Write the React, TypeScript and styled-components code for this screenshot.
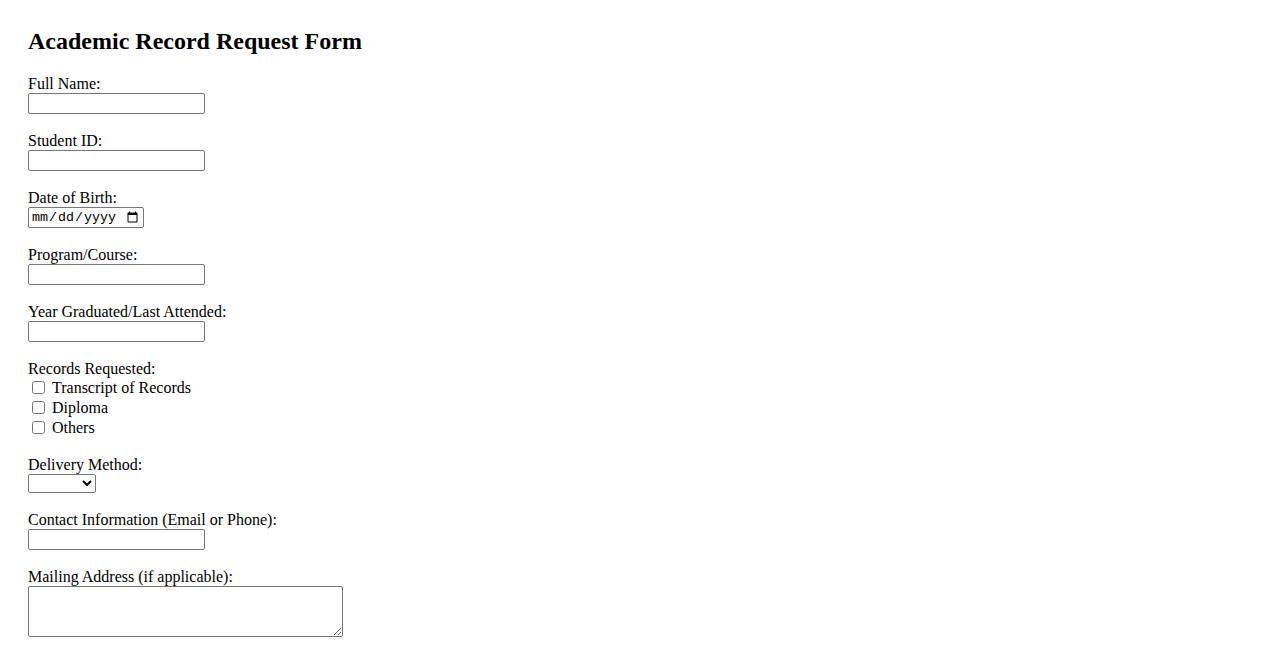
import styled, { createGlobalStyle } from "styled-components";

const GlobalStyle = createGlobalStyle`
	html, body {
		margin: 0;
		padding: 0;
		background: #fff;
	}
	body {
		font-family: "Liberation Serif", "Times New Roman", serif;
		font-size: 16px;
		color: #000;
	}
`;

const Page = styled.div`
	padding: 28px;
`;

const Title = styled.h2`
	margin: 0 0 20px;
	font-size: 24px;
	line-height: 27px;
	font-weight: bold;
`;

const Form = styled.form`
	display: flex;
	flex-direction: column;
	gap: 18px;
`;

const Field = styled.div`
	display: flex;
	flex-direction: column;
	align-items: flex-start;
`;

const Label = styled.label`
	display: block;
	line-height: 18px;
	height: 18px;
`;

const TextInput = styled.input<{ $width?: number }>`
	box-sizing: border-box;
	width: ${p => p.$width ?? 177}px;
	height: 21px;
	margin: 0;
	padding: 1px 2px;
	border: 1px solid #767676;
	border-radius: 2px;
	background: #fff;
	font-family: "Liberation Mono", monospace;
	font-size: 13.33px;
	color: #000;
`;

const Select = styled.select`
	box-sizing: border-box;
	width: 68px;
	height: 19px;
	margin: 0;
	border: 1px solid #767676;
	border-radius: 2px;
	background: #fff;
	font-size: 13.33px;
`;

const TextArea = styled.textarea`
	box-sizing: border-box;
	width: 315px;
	height: 51px;
	margin: 0;
	padding: 2px;
	border: 1px solid #767676;
	border-radius: 2px;
	font-family: "Liberation Mono", monospace;
	font-size: 13.33px;
`;

const CheckRow = styled.label`
	display: flex;
	align-items: center;
	height: 20px;
	line-height: 20px;
`;

const Check = styled.input`
	width: 13px;
	height: 13px;
	margin: 0 7px 1px 4px;
`;

const records = ["Transcript of Records", "Diploma", "Others"];

export default function App() {
	return (
		<Page>
			<GlobalStyle />
			<Title>Academic Record Request Form</Title>
			<Form onSubmit={e => e.preventDefault()}>
				<Field>
					<Label htmlFor="fullName">Full Name:</Label>
					<TextInput id="fullName" type="text" />
				</Field>
				<Field>
					<Label htmlFor="studentId">Student ID:</Label>
					<TextInput id="studentId" type="text" />
				</Field>
				<Field>
					<Label htmlFor="dob">Date of Birth:</Label>
					<TextInput id="dob" type="date" $width={116} />
				</Field>
				<Field>
					<Label htmlFor="program">Program/Course:</Label>
					<TextInput id="program" type="text" />
				</Field>
				<Field>
					<Label htmlFor="year">Year Graduated/Last Attended:</Label>
					<TextInput id="year" type="text" />
				</Field>
				<Field>
					<Label as="span">Records Requested:</Label>
					{records.map(r => (
						<CheckRow key={r}>
							<Check type="checkbox" />
							{r}
						</CheckRow>
					))}
				</Field>
				<Field>
					<Label htmlFor="delivery">Delivery Method:</Label>
					<Select id="delivery" defaultValue="">
						<option value=""></option>
						<option value="pickup">Pick-up</option>
						<option value="email">Email</option>
						<option value="courier">Courier</option>
					</Select>
				</Field>
				<Field>
					<Label htmlFor="contact">Contact Information (Email or Phone):</Label>
					<TextInput id="contact" type="text" />
				</Field>
				<Field>
					<Label htmlFor="address">Mailing Address (if applicable):</Label>
					<TextArea id="address" />
				</Field>
			</Form>
		</Page>
	);
}
